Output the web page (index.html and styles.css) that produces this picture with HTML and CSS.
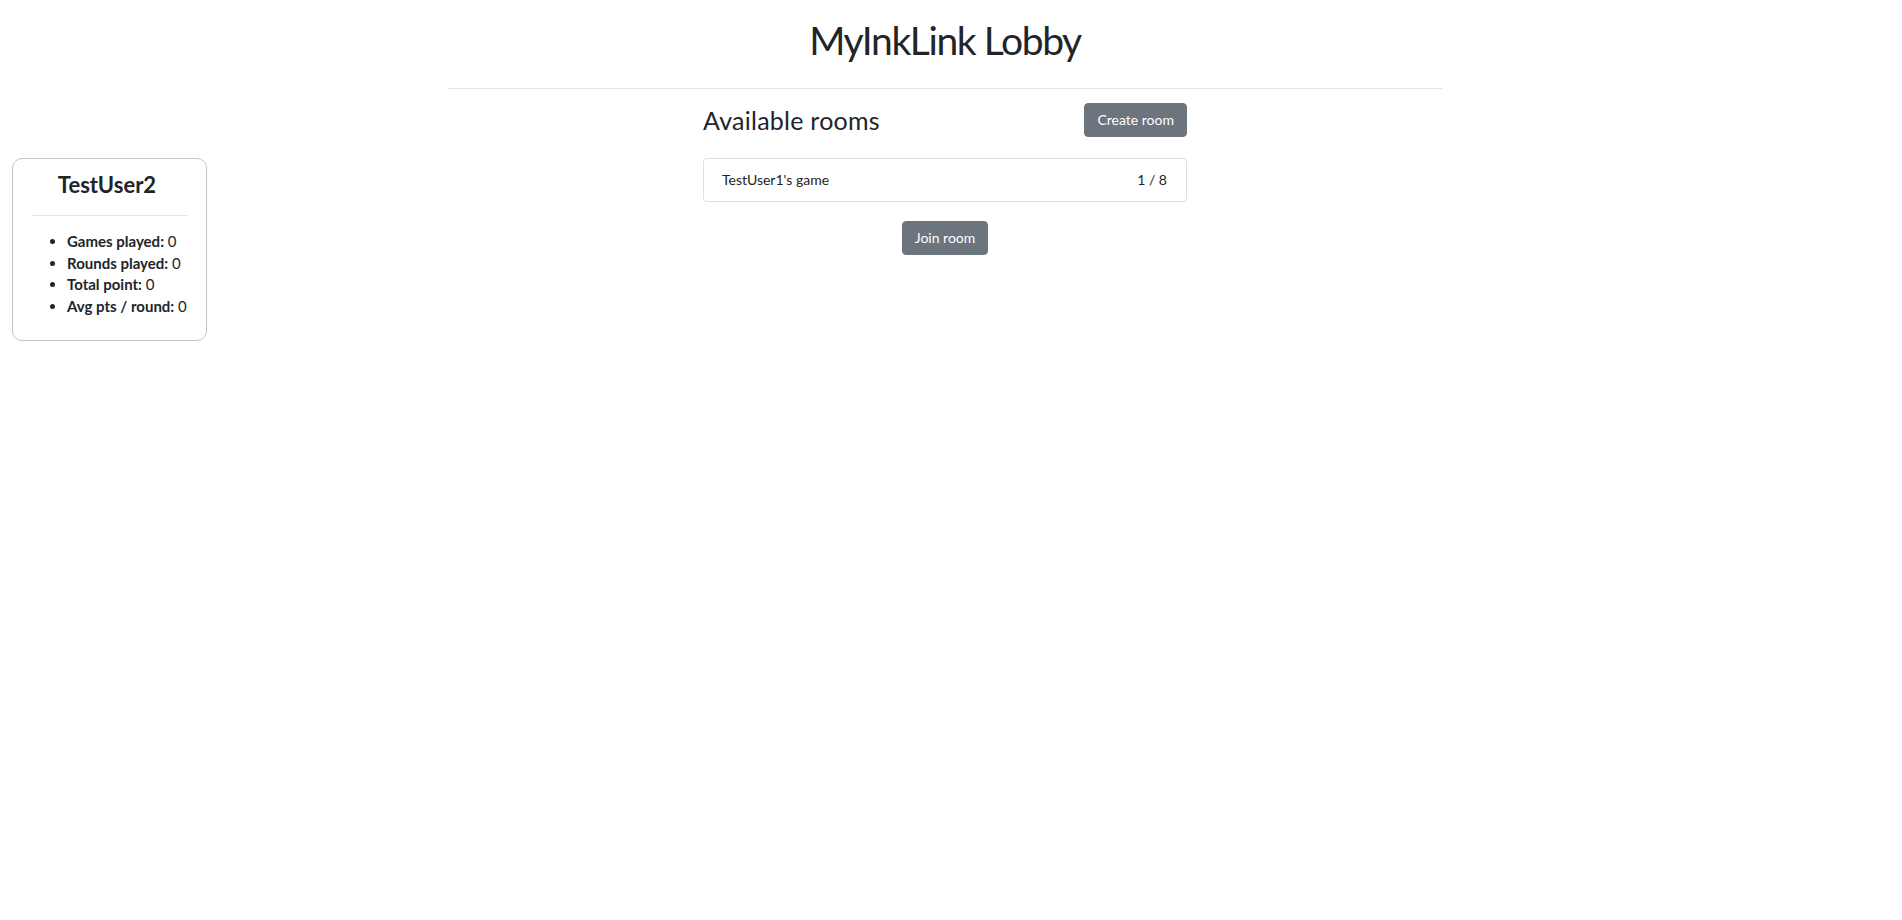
FILE: index.html
```html
<!DOCTYPE html>
<html lang="en">
<head>
<meta charset="utf-8">
<title>MyInkLink Lobby</title>
<link rel="stylesheet" href="styles.css">
</head>
<body>
<div class="page">
  <header class="top">
    <h1 class="title">MyInkLink Lobby</h1>
    <hr class="rule">
  </header>
  <main class="lobby">
    <div class="rooms-head">
      <h2 class="rooms-title">Available rooms</h2>
      <button class="btn" type="button">Create room</button>
    </div>
    <aside class="user-card">
      <h3 class="user-name">TestUser2</h3>
      <hr class="card-rule">
      <ul class="stats">
        <li><b>Games played:</b> 0</li>
        <li><b>Rounds played:</b> 0</li>
        <li><b>Total point:</b> 0</li>
        <li><b>Avg pts / round:</b> 0</li>
      </ul>
    </aside>
    <section class="rooms">
      <ul class="room-list">
        <li class="room"><span>TestUser1's game</span><span>1 / 8</span></li>
      </ul>
      <div class="join-row">
        <button class="btn" type="button">Join room</button>
      </div>
    </section>
  </main>
</div>
</body>
</html>
```
FILE: styles.css
```css
* { box-sizing: border-box; }
html, body { margin: 0; background: #fff; }
body {
  font-family: Lato, "Open Sans", sans-serif;
  color: #212529;
  font-size: 14px;
  line-height: 1.5;
}
.page {
  padding: 16px 12px 0 0;
}
.top {
  width: 994px;
  margin: 0 auto;
}
.title {
  margin: 0;
  font-size: 39px;
  font-weight: 400;
  line-height: 48px;
  letter-spacing: -1.4px;
  text-align: center;
}
.rule {
  margin: 24px 0 14px;
  border: 0;
  border-top: 1px solid #e5e5e5;
  height: 0;
}
.lobby {
  display: grid;
  grid-template-columns: 1fr 484px 1fr;
  grid-template-rows: auto auto;
}
.rooms-head {
  grid-column: 2;
  grid-row: 1;
  display: flex;
  justify-content: space-between;
  align-items: center;
  margin-bottom: 21px;
}
.rooms-title {
  margin: 0;
  font-size: 25px;
  font-weight: 400;
  line-height: 29px;
  letter-spacing: 0.25px;
}
.btn {
  font-family: inherit;
  font-size: 14px;
  line-height: 20px;
  padding: 6px 12px;
  color: #fff;
  background: #6c757d;
  border: 1px solid #6c757d;
  border-radius: 4px;
  cursor: pointer;
}
.user-card {
  grid-column: 1;
  grid-row: 2;
  justify-self: start;
  align-self: start;
  width: 195px;
  margin-left: 12px;
  padding: 13px 18px 10px;
  border: 1px solid #c4c4c4;
  border-radius: 10px;
}
.user-name {
  margin: 0;
  padding-right: 5px;
  font-size: 22px;
  font-weight: 700;
  line-height: 25px;
  text-align: center;
}
.card-rule {
  margin: 18px 0 15px;
  border: 0;
  border-top: 1px solid #e5e5e5;
  height: 0;
}
.stats {
  margin: 0 0 13px;
  padding-left: 36px;
  font-size: 15px;
  line-height: 21.6px;
}
.rooms {
  grid-column: 2;
  grid-row: 2;
}
.room-list {
  list-style: none;
  margin: 0;
  padding: 0;
}
.room {
  display: flex;
  justify-content: space-between;
  padding: 11px 19px 11px 18px;
  line-height: 20px;
  border: 1px solid #dfdfdf;
  border-radius: 4px;
}
.join-row {
  display: flex;
  justify-content: center;
  margin-top: 19px;
}
```
